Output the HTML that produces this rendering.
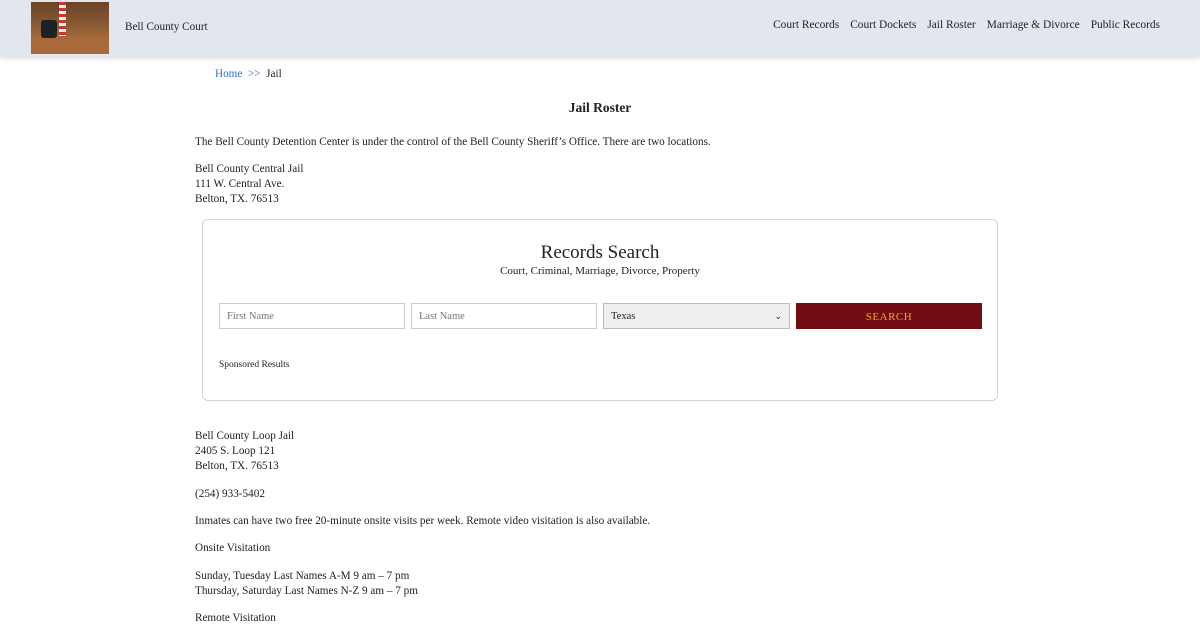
<!DOCTYPE html>
<html><head><meta charset="utf-8"><style>
*{margin:0;padding:0;box-sizing:border-box}
body{width:1200px;height:620px;overflow:hidden;background:#fff;font-family:"Liberation Serif",serif;color:#222;font-size:11.2px}
.hdr{height:57px;background:#e2e7ef;position:relative;box-shadow:0 2px 4px rgba(0,0,0,.12)}
.logo{position:absolute;left:31px;top:2px;width:78px;height:52px;background:linear-gradient(180deg,#6b4226 0%,#8a5a33 45%,#a86b3a 70%,#5a3520 100%);overflow:hidden}
.logo .chair{position:absolute;left:10px;top:18px;width:16px;height:18px;background:#1c2326;border-radius:3px}
.logo .flag{position:absolute;left:28px;top:0;width:7px;height:34px;background:repeating-linear-gradient(180deg,#c33 0 3px,#eee 3px 6px)}
.logo .desk{position:absolute;left:0;top:36px;width:78px;height:16px;background:#a86a38}
.brand{position:absolute;left:125px;top:21px}
.nav{position:absolute;right:40px;top:19px;font-size:11.4px}
.nav span{margin-left:11px}
.bc{position:absolute;left:215px;top:68px}
.bc a{color:#2a6fd6;text-decoration:none}
h1{position:absolute;left:0;width:1200px;text-align:center;top:100px;font-size:13.5px;font-weight:bold}
.p{position:absolute;left:195px;line-height:15px}
.box{position:absolute;left:202px;top:219px;width:796px;height:182px;border:1px solid #d4d4d4;border-radius:6px}
.box .t{position:absolute;top:22px;width:100%;text-align:center;font-size:19px}
.box .s{position:absolute;top:45px;width:100%;text-align:center;font-size:11px}
.in{position:absolute;top:83px;height:26px;border:1px solid #ccc;background:#fff;font-size:10.5px;color:#777;padding:7px 7px}
.sel{background:#efefef;color:#222;border-color:#bbb}
.btn{position:absolute;top:83px;left:593px;width:186px;height:26px;background:#720d14;color:#e8a53b;text-align:center;font-size:11px;letter-spacing:.5px;line-height:28px}
.sp{position:absolute;top:140px;left:16px;font-size:9.5px}
</style></head><body>
<div class="hdr"><div class="logo"><div class="desk"></div><div class="chair"></div><div class="flag"></div></div>
<div class="brand">Bell County Court</div>
<div class="nav"><span>Court Records</span><span>Court Dockets</span><span>Jail Roster</span><span>Marriage &amp; Divorce</span><span>Public Records</span></div></div>
<div class="bc"><a>Home</a> &nbsp;<a>&gt;&gt;</a> &nbsp;Jail</div>
<h1>Jail Roster</h1>
<div class="p" style="top:135px">The Bell County Detention Center is under the control of the Bell County Sheriff’s Office. There are two locations.</div>
<div class="p" style="top:162px">Bell County Central Jail<br>111 W. Central Ave.<br>Belton, TX. 76513</div>
<div class="box"><div class="t">Records Search</div><div class="s">Court, Criminal, Marriage, Divorce, Property</div>
<div class="in" style="left:16px;width:186px">First Name</div>
<div class="in" style="left:208px;width:186px">Last Name</div>
<div class="in sel" style="left:400px;width:187px">Texas<span style="float:right;font-size:9px">&#x2304;</span></div>
<div class="btn">SEARCH</div>
<div class="sp">Sponsored Results</div></div>
<div class="p" style="top:429px">Bell County Loop Jail<br>2405 S. Loop 121<br>Belton, TX. 76513</div>
<div class="p" style="top:487px">(254) 933-5402</div>
<div class="p" style="top:514px">Inmates can have two free 20-minute onsite visits per week. Remote video visitation is also available.</div>
<div class="p" style="top:541px">Onsite Visitation</div>
<div class="p" style="top:569px">Sunday, Tuesday Last Names A-M 9 am – 7 pm<br>Thursday, Saturday Last Names N-Z 9 am – 7 pm</div>
<div class="p" style="top:611px">Remote Visitation</div>
</body></html>
